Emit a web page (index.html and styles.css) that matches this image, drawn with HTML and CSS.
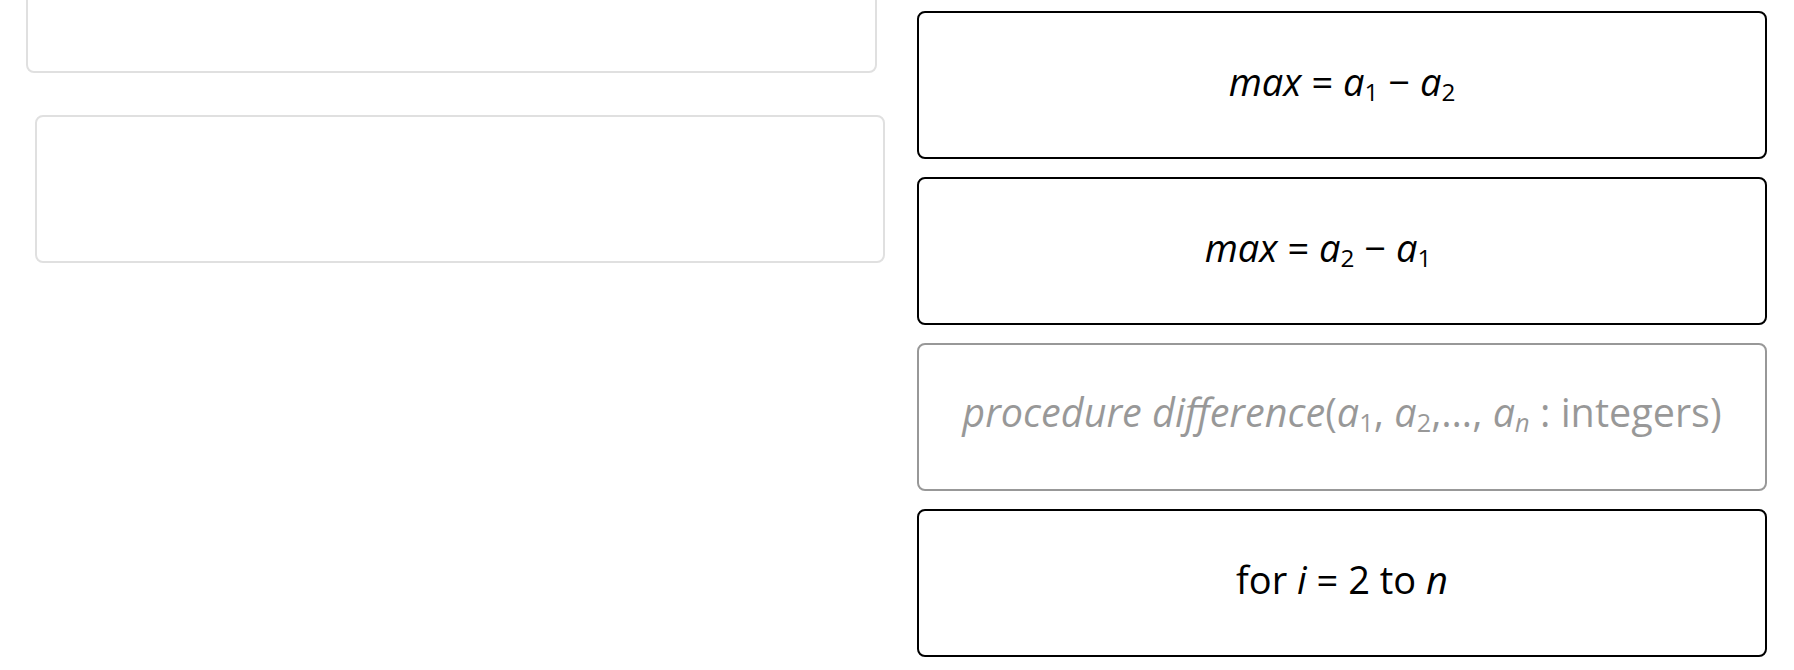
FILE: index.html
```html
<!DOCTYPE html>
<html>
<head>
<meta charset="utf-8">
<link rel="stylesheet" href="styles.css">
</head>
<body>
<div class="page">
  <div class="left">
    <div class="slot slot-first"></div>
    <div class="slot slot-second"></div>
  </div>
  <div class="right">
    <div class="card"><span class="expr"><i>max</i> = <i>a</i><sub>1</sub> − <i>a</i><sub>2</sub></span></div>
    <div class="card"><span class="expr shift"><i>max</i> = <i>a</i><sub>2</sub> − <i>a</i><sub>1</sub></span></div>
    <div class="card card-dragging"><span class="expr wide"><i>procedure difference</i>(<i>a</i><sub>1</sub>, <i>a</i><sub>2</sub>,…, <i>a<sub>n</sub></i> : integers)</span></div>
    <div class="card"><span class="expr">for <i>i</i> = 2 to <i>n</i></span></div>
  </div>
</div>
</body>
</html>
```

FILE: styles.css
```css
html, body {
  margin: 0;
  padding: 0;
  background: #fff;
  overflow: hidden;
}

.page {
  display: flex;
  align-items: flex-start;
  width: 1794px;
  height: 670px;
}

.left {
  width: 917px;
  flex: none;
  display: flex;
  flex-direction: column;
}

.slot {
  box-sizing: border-box;
  height: 148px;
  border: 2px solid #e0e0e0;
  border-radius: 8px;
  background: #fff;
}

.slot-first {
  width: 851px;
  margin-left: 26px;
  margin-top: -75px;
}

.slot-second {
  width: 850px;
  margin-left: 35px;
  margin-top: 42px;
}

.right {
  display: flex;
  flex-direction: column;
  gap: 18px;
  padding-top: 11px;
}

.card {
  box-sizing: border-box;
  width: 850px;
  height: 148px;
  padding-bottom: 8px;
  border: 2px solid #000;
  border-radius: 8px;
  background: #fff;
  display: flex;
  align-items: center;
  justify-content: center;
  font-family: "Open Sans", "Noto Sans", sans-serif;
  color: #000;
}

.card-dragging {
  opacity: 0.4;
}

.expr {
  font-size: 38px;
  line-height: 1;
  white-space: nowrap;
}

.expr.wide {
  font-size: 39.6px;
}

.expr.shift {
  margin-right: 48px;
}

.expr i {
  font-style: italic;
}

.expr sub {
  font-size: 0.64em;
  vertical-align: -0.2em;
  line-height: 0;
}
```
